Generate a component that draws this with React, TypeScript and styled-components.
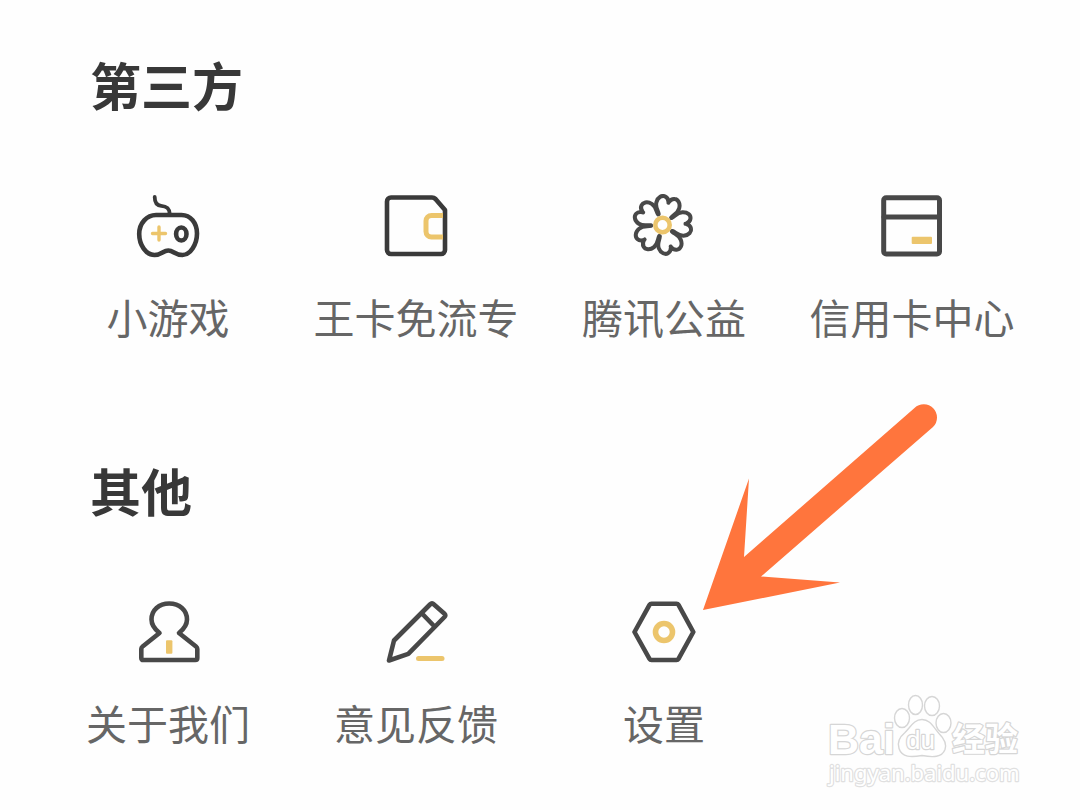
import React from "react";
import styled, { createGlobalStyle } from "styled-components";

const DARK = "#3a3a3a";
const GREY = "#484848";
const GOLD = "#ecc56c";

const GlobalStyle = createGlobalStyle`
  * { box-sizing: border-box; }
  body {
    margin: 0;
    background: #fefefe;
    font-family: "Noto Sans CJK SC", sans-serif;
  }
`;

const Page = styled.main`
  position: relative;
  min-height: 100vh;
  padding: 54px 44px 0;
  display: flex;
  flex-direction: column;
  gap: 114px;
  overflow: hidden;
`;

const Section = styled.section`
  display: flex;
  flex-direction: column;
  gap: 80px;
`;

const Heading = styled.h2`
  margin: 0;
  padding-left: 46px;
  font-size: 51px;
  line-height: 60px;
  font-weight: 700;
  color: #383838;
`;

const Grid = styled.div`
  display: grid;
  grid-template-columns: repeat(4, minmax(0, 1fr));
`;

const Cell = styled.div`
  position: relative;
  display: flex;
  justify-content: center;
`;

const Entry = styled.button`
  display: flex;
  flex-direction: column;
  align-items: center;
  gap: 28px;
  padding: 0;
  border: 0;
  background: none;
  font-family: inherit;
  cursor: pointer;
`;

const Label = styled.span`
  font-size: 41px;
  line-height: 60px;
  color: #666666;
  white-space: nowrap;
`;

const IconSvg = styled.svg<{ $tone: string }>`
  width: 64px;
  height: 64px;
  fill: none;
  stroke: ${(p) => p.$tone};
  stroke-width: 4.6;
  stroke-linejoin: round;
  stroke-linecap: round;
`;

const Arrow = styled.svg`
  position: absolute;
  top: -196px;
  left: calc(50% + 38px);
  width: 236px;
  height: 208px;
  pointer-events: none;
`;

const Watermark = styled.svg`
  position: absolute;
  right: 50px;
  bottom: 10px;
  width: 210px;
  height: 110px;
  fill: #ffffff;
  stroke: #d6d6d6;
  stroke-width: 1.4;
  stroke-linejoin: round;
  pointer-events: none;

  text {
    stroke-width: 2.4;
    paint-order: stroke;
  }
`;

function Icon({ tone = GREY, children }: { tone?: string; children: React.ReactNode }) {
  return (
    <IconSvg $tone={tone} viewBox="0 0 64 64" aria-hidden="true">
      {children}
    </IconSvg>
  );
}

const GamepadIcon = () => (
  <Icon tone={DARK}>
    <path strokeWidth="3.8" d="M18.700 3c0 5.500 2 8.500 6.500 8.800 5 .4 8.300 2 8.500 8" />
    <path d="M20 21h25.500C54.500 21 61 29 61 39.500S54.500 61 46.500 61C39 61 37.500 56.500 32.300 56.500S25.500 61 18.500 61C10 61 3.200 51 3.200 40S11 21 20 21Z" />
    <path stroke={GOLD} strokeWidth="3.400" d="M23 33v13M16.500 39.500h13" />
    <ellipse cx="45.300" cy="40" rx="5.200" ry="6.500" />
  </Icon>
);

const WalletIcon = () => (
  <Icon tone={DARK}>
    <path d="M61 16v40a4 4 0 0 1-4 4H7a4 4 0 0 1-4-4V7.500a4 4 0 0 1 4-4h41q2 0 3.500 1.500Z" />
    <path stroke={GOLD} strokeLinecap="butt" strokeWidth="5" d="M59 21.500H47.500a5.500 5.500 0 0 0-5.500 5.500v10.500a5.500 5.500 0 0 0 5.500 5.500H59" />
  </Icon>
);

const PETAL_ANGLES = [15, 87, 159, 231, 303];

const FlowerIcon = () => (
  <Icon>
    <g transform="translate(30.5 31)" strokeWidth="4">
      {PETAL_ANGLES.map((angle) => (
        <path
          key={angle}
          transform={`rotate(${angle})`}
          d="M-6.500-9.500C-8-13-11.800-15-11.800-20.500C-11.800-26-8-28.800-5-28.300Q-1.500-27.800 0-23.500Q1.500-27.800 5-28.300C8-28.800 11.800-26 11.800-20.500C11.800-15 8-13 6.500-9.500M0-23.500v.5"
        />
      ))}
      <circle r="7.200" stroke={GOLD} strokeWidth="4.600" />
    </g>
  </Icon>
);

const CardIcon = () => (
  <Icon>
    <rect x="3.700" y="3.700" width="55.800" height="56.300" rx="2.500" strokeWidth="5" />
    <path strokeWidth="5" d="M4 23h55" />
    <rect x="31.700" y="42.700" width="20.300" height="7.200" rx="1" fill={GOLD} stroke="none" />
  </Icon>
);

const UserIcon = () => (
  <Icon>
    <path d="M23.500 33C18.500 29 15.500 25 15.500 19.500C15.500 10 23 3.500 33.200 3.500S51 10 51 19.500C51 25 48 29 43 33L60 46.500Q61.300 47.500 61.300 49v9q0 2-2 2H7.300q-2 0-2-2V49q0-1.500 1.300-2.500Z" />
    <rect x="30" y="40.300" width="6.400" height="13.400" rx="1" fill={GOLD} stroke="none" />
  </Icon>
);

const PencilIcon = () => (
  <Icon>
    <path strokeWidth="4.600" d="M5 60.500L10 40.500L46 4.500q2-2 4 0L60.500 13.700q1.500 1.700 0 3.300L24.300 53.800ZM38 13.500L50 26" />
    <path stroke={GOLD} strokeWidth="5" d="M34.500 58.500H58" />
  </Icon>
);

const SettingsIcon = () => (
  <Icon>
    <path d="M19.500 3.700h25q1.300 0 2 1.200L61.300 32L46.500 58.800q-.7 1.200-2 1.200h-25q-1.300 0-2-1.200L2.500 32L17.500 4.900q.7-1.200 2-1.200Z" />
    <circle cx="32" cy="32" r="8.500" stroke={GOLD} strokeWidth="5.600" />
  </Icon>
);

const Pointer = () => (
  <Arrow viewBox="702 403 236 208" aria-hidden="true">
    <path
      fill="#ff753d"
      d="M703 609L749 477.500L744 556L914.500 407A12.800 12.800 0 0 1 933 426L761 575.500L840 581.500Z"
    />
  </Arrow>
);

const Logo = () => (
  <Watermark viewBox="820 690 210 110">
    <text x="828" y="754" fontSize="43" fontWeight="700" fontFamily="Liberation Sans, sans-serif">Bai</text>
    <ellipse cx="902" cy="718" rx="7.500" ry="9.500" />
    <ellipse cx="915.500" cy="705" rx="7" ry="9.500" />
    <ellipse cx="932" cy="706" rx="7.500" ry="9.500" />
    <ellipse cx="943.500" cy="723" rx="7.500" ry="9.500" />
    <path d="M922 719.500c-8 0-11 7-17 13-6 5-8 10-6 16 3 9 12 9 23 7 11 2 20 2 23-6 2-6-1-11-6-16-6-7-9-14-17-14Z" />
    <text x="906" y="749" fontSize="26" fontFamily="Liberation Sans, sans-serif">du</text>
    <text x="952" y="751" fontSize="33" fontWeight="700" fontFamily="Noto Sans CJK SC, sans-serif">经验</text>
    <text x="829" y="781" fontSize="22" stroke="#e0e0e0" fontFamily="Noto Sans, sans-serif">jingyan.baidu.com</text>
  </Watermark>
);

type Item = { label: string; icon: React.ReactNode; pointed?: boolean };

const sections: { title: string; items: Item[] }[] = [
  {
    title: "第三方",
    items: [
      { label: "小游戏", icon: <GamepadIcon /> },
      { label: "王卡免流专", icon: <WalletIcon /> },
      { label: "腾讯公益", icon: <FlowerIcon /> },
      { label: "信用卡中心", icon: <CardIcon /> },
    ],
  },
  {
    title: "其他",
    items: [
      { label: "关于我们", icon: <UserIcon /> },
      { label: "意见反馈", icon: <PencilIcon /> },
      { label: "设置", icon: <SettingsIcon />, pointed: true },
    ],
  },
];

export default function App() {
  return (
    <>
      <GlobalStyle />
      <Page lang="zh-CN">
        {sections.map((section) => (
          <Section key={section.title}>
            <Heading>{section.title}</Heading>
            <Grid>
              {section.items.map((item) => (
                <Cell key={item.label}>
                  <Entry type="button">
                    {item.icon}
                    <Label>{item.label}</Label>
                  </Entry>
                  {item.pointed && <Pointer />}
                </Cell>
              ))}
            </Grid>
          </Section>
        ))}
        <Logo />
      </Page>
    </>
  );
}
